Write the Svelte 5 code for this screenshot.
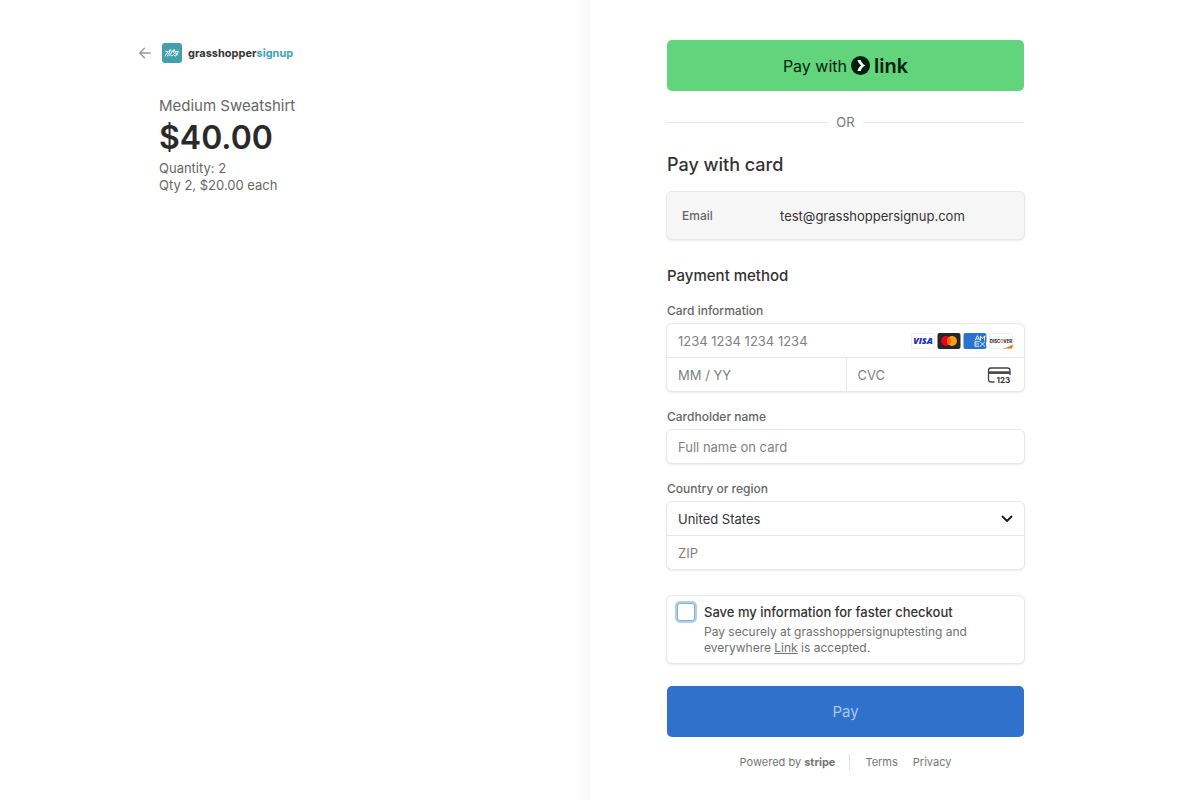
<script>
  let cardNumber = $state('');
  let expiry = $state('');
  let cvc = $state('');
  let name = $state('');
  let country = $state('US');
  let zip = $state('');
  let save = $state(false);

  const countries = [
    { code: 'US', label: 'United States' },
    { code: 'CA', label: 'Canada' },
    { code: 'GB', label: 'United Kingdom' }
  ];
</script>

<main class="checkout">
  <section class="summary">
    <header class="brand">
      <a class="back" href="#back" aria-label="Back">
        <svg width="12" height="12" viewBox="0 0 12 12" fill="none" stroke="#999" stroke-width="1.4" stroke-linecap="round" stroke-linejoin="round">
          <path d="M11.3 6H1M5.4 1.2L.8 6l4.6 4.8" />
        </svg>
      </a>
      <svg class="logo" width="20" height="20" viewBox="0 0 20 20">
        <rect width="20" height="20" rx="3" fill="#429fae" />
        <g fill="none" stroke="#fff" stroke-width="0.9" stroke-linejoin="round" stroke-linecap="round">
          <path d="M3.200 13L5 9.500l1.600 1L5.300 13M3.600 8.200l3 .8 1.600-2.200L10 8.700l2-2 1.400 2 3-.5-1.600 3.800-1.800 1.200-1.400-1.700-1.800 1.700-1.700-1.900-1.500 1.700" />
          <path d="M8.200 6.800l-1 3.700M12 6.700l-.6 2.800 1.700 1.300M9.800 8.700l-1 2.200M13.400 8.700l1.400 3.300" />
        </g>
      </svg>
      <span class="brand-name">grasshopper<span class="teal">signup</span></span>
    </header>
    <div class="product">
      <h1>Medium Sweatshirt</h1>
      <p class="price">$40.00</p>
      <p class="detail">Quantity: 2</p>
      <p class="detail">Qty 2, $20.00 each</p>
    </div>
  </section>

  <section class="payment">
    <form onsubmit={(e) => e.preventDefault()}>
      <button type="button" class="link-button">
        <span>Pay with</span>
        <svg width="19" height="19" viewBox="0 0 19 19">
          <circle cx="9.5" cy="9.5" r="9.5" fill="#011e0f" />
          <path d="M6.500 4h3.200c.6 2.300 2.200 4.200 4.600 5.500-2.400 1.300-4 3.200-4.600 5.500H6.500c.6-2.300 1.900-4.200 3.800-5.500C8.400 8.200 7.100 6.300 6.500 4z" fill="#fff" />
        </svg>
        <strong>link</strong>
      </button>

      <div class="divider"><span>OR</span></div>

      <h2>Pay with card</h2>
      <dl class="box email">
        <dt>Email</dt>
        <dd>test@grasshoppersignup.com</dd>
      </dl>

      <h3>Payment method</h3>

      <div class="field">
        <label for="card-number">Card information</label>
        <div class="box">
          <div class="row">
            <input id="card-number" placeholder="1234 1234 1234 1234" bind:value={cardNumber} />
            <div class="cards">
              <svg width="24" height="16" viewBox="0 0 24 16" role="img" aria-label="Visa">
                <rect x=".5" y=".5" width="23" height="15" rx="2" fill="#fff" stroke="#ececec" />
                <text x="12" y="11.300" text-anchor="middle" font-family="Open Sans, sans-serif" font-size="9" font-weight="800" font-style="italic" fill="#2029c4">VISA</text>
              </svg>
              <svg width="24" height="16" viewBox="0 0 24 16" role="img" aria-label="Mastercard">
                <rect x=".5" width="23" height="16" rx="2" fill="#252525" />
                <circle cx="9" cy="8" r="5" fill="#eb001b" />
                <circle cx="15" cy="8" r="5" fill="#f79e1b" />
                <path d="M12 4a5 5 0 0 1 0 8 5 5 0 0 1 0-8z" fill="#ff5f00" />
              </svg>
              <svg width="24" height="16" viewBox="0 0 24 16" role="img" aria-label="American Express">
                <rect x=".5" width="23" height="16" rx="2" fill="#2a72d0" />
                <g fill="none" stroke="#fff" stroke-width="1" opacity=".85">
                  <path d="M12 7.500l2.500-4.800L17 7.500M13 6h3M17.500 7.500V3l2 2.500 2-2.500v4.500M23.500 3H22M12 13.300V8.700h4.500M12 11h4M12 13.300h4.500M17 8.700l5 4.800M22 8.700l-5 4.800M23.500 9v4" />
                </g>
              </svg>
              <svg width="24" height="16" viewBox="0 0 24 16" role="img" aria-label="Discover">
                <rect x=".5" y=".5" width="23" height="15" rx="2" fill="#fff" stroke="#ececec" />
                <path d="M14 15.500c3.500-.7 7-2.200 9.500-4v2.500c0 .8-.7 1.500-1.500 1.500z" fill="#f47216" />
                <text x="12" y="9.700" text-anchor="middle" font-family="Inter, sans-serif" font-size="4.300" font-weight="800" fill="#333">DISC<tspan fill="#f47216">O</tspan>VER</text>
              </svg>
            </div>
          </div>
          <div class="row split">
            <input aria-label="Expiration" placeholder="MM / YY" bind:value={expiry} />
            <div class="cvc">
              <input aria-label="CVC" placeholder="CVC" bind:value={cvc} />
              <svg width="24" height="18" viewBox="0 0 24 18">
                <path d="M7.500 16H4a2.500 2.500 0 0 1-2.500-2.500v-9A2.500 2.500 0 0 1 4 2h16.500A2.500 2.500 0 0 1 23 4.500V9" fill="none" stroke="#444" stroke-width="1.300" />
                <path d="M1.500 5.300H23v2.600H1.500z" fill="#444" />
                <text x="9.500" y="17" font-family="Inter, sans-serif" font-size="8" font-weight="700" fill="#333">123</text>
              </svg>
            </div>
          </div>
        </div>
      </div>

      <div class="field">
        <label for="name">Cardholder name</label>
        <div class="box">
          <div class="row"><input id="name" placeholder="Full name on card" bind:value={name} /></div>
        </div>
      </div>

      <div class="field">
        <label for="country">Country or region</label>
        <div class="box">
          <div class="row select">
            <select id="country" bind:value={country}>
              {#each countries as c}
                <option value={c.code}>{c.label}</option>
              {/each}
            </select>
            <svg width="12" height="8" viewBox="0 0 12 8" fill="none" stroke="#1a1a1a" stroke-width="1.800" stroke-linecap="round" stroke-linejoin="round">
              <path d="M1.500 1.500L6 6l4.500-4.500" />
            </svg>
          </div>
          <div class="row"><input aria-label="ZIP" placeholder="ZIP" bind:value={zip} /></div>
        </div>
      </div>

      <div class="box save">
        <input id="save" type="checkbox" bind:checked={save} />
        <div>
          <label for="save">Save my information for faster checkout</label>
          <p>Pay securely at grasshoppersignuptesting and everywhere <a href="#link">Link</a> is accepted.</p>
        </div>
      </div>

      <button type="submit" class="pay">Pay</button>
    </form>

    <footer>
      <span class="powered">Powered by <b>stripe</b></span>
      <nav>
        <a href="#terms">Terms</a>
        <a href="#privacy">Privacy</a>
      </nav>
    </footer>
  </section>
</main>

<style>
  :global(body) {
    background: #fff;
  }

  .checkout {
    display: grid;
    grid-template-columns: 59fr 61fr;
    min-height: 100vh;
    font-family: Inter, 'Liberation Sans', sans-serif;
    color: #333;
  }

  h1, h2, h3, p, dl, dd {
    margin: 0;
  }

  svg {
    display: block;
    flex: none;
  }

  .summary {
    padding: 43px 24px 40px 139px;
    background: linear-gradient(to left, #f9f9f9, #fff 14px);
  }

  .brand {
    display: flex;
    align-items: center;
    height: 20px;
  }

  .logo {
    margin: 0 6px 0 11px;
  }

  .brand-name {
    font-size: 11px;
    font-weight: 700;
    line-height: 16px;
  }

  .teal {
    color: #3fa3b5;
  }

  .product {
    padding: 33px 0 0 20px;
    color: #666;
  }

  h1 {
    font-size: 15px;
    font-weight: 400;
    line-height: 20px;
  }

  .price {
    font-size: 32px;
    font-weight: 600;
    line-height: 44px;
    color: #2a2a2a;
  }

  .detail {
    font-size: 13px;
    line-height: 17px;
  }

  .payment {
    padding: 40px 24px 24px 77px;
  }

  form, footer {
    max-width: 357px;
  }

  button {
    display: flex;
    align-items: center;
    justify-content: center;
    width: 100%;
    height: 51px;
    border: 0;
    border-radius: 5px;
    font-family: inherit;
    font-size: 16px;
  }

  .link-button {
    gap: 4px;
    background: #62d47b;
    color: #011e0f;
  }

  .link-button strong {
    font-size: 20px;
    font-weight: 600;
  }

  .divider {
    display: flex;
    align-items: center;
    gap: 8px;
    margin: 21px 0;
    font-size: 13px;
    line-height: 20px;
    color: #777;
  }

  .divider::before,
  .divider::after {
    content: '';
    flex: 1;
    height: 1px;
    background: #e6e6e6;
  }

  h2 {
    font-size: 18px;
    font-weight: 500;
    line-height: 24px;
  }

  h3 {
    margin-top: 27px;
    font-size: 15px;
    font-weight: 500;
    line-height: 20px;
  }

  .box {
    border-radius: 5px;
    background: #fff;
    box-shadow: 0 0 0 1px #e8e8e8, 0 1px 2px 1px rgba(0, 0, 0, 0.07);
  }

  .email {
    display: grid;
    grid-template-columns: 98px 1fr;
    align-items: center;
    height: 47px;
    margin-top: 15px;
    padding: 0 15px;
    background: #f6f6f6;
    font-size: 13px;
  }

  .email dt {
    font-size: 12px;
    font-weight: 500;
    color: #666;
  }

  .field {
    margin-top: 18px;
  }

  h3 + .field {
    margin-top: 17px;
  }

  .field label {
    display: block;
    margin-bottom: 5px;
    font-size: 12px;
    font-weight: 500;
    line-height: 16px;
    color: #666;
  }

  .row {
    display: flex;
    align-items: center;
    height: 33px;
  }

  .row + .row {
    border-top: 1px solid #e8e8e8;
  }

  .split {
    display: grid;
    grid-template-columns: 1fr 1fr;
  }

  .row input,
  .row select {
    box-sizing: border-box;
    flex: 1;
    min-width: 0;
    height: 100%;
    padding: 0 11px;
    border: 0;
    outline: 0;
    background: none;
    font-family: inherit;
    font-size: 13px;
    color: #333;
  }

  .row input::placeholder {
    color: #808080;
    opacity: 1;
  }

  .cards {
    display: flex;
    gap: 2px;
    margin-right: 11px;
  }

  .cvc {
    display: flex;
    align-items: center;
    min-width: 0;
    height: 100%;
    border-left: 1px solid #e8e8e8;
  }

  .cvc svg {
    margin-right: 13px;
  }

  .select {
    display: grid;
    align-items: center;
  }

  .select select {
    grid-area: 1 / 1;
    width: 100%;
    appearance: none;
  }

  .select svg {
    grid-area: 1 / 1;
    justify-self: end;
    margin-right: 11px;
    pointer-events: none;
  }

  .save {
    display: flex;
    gap: 9px;
    margin-top: 27px;
    padding: 7px 10px;
  }

  .save input {
    appearance: none;
    flex: none;
    box-sizing: border-box;
    width: 18px;
    height: 18px;
    margin: 0;
    border: 1px solid #84afd3;
    border-radius: 3px;
    background: #fff;
    box-shadow: 0 0 0 2px #b2d1e9;
  }

  .save input:checked {
    background: #3171cc;
  }

  .save label {
    display: block;
    font-size: 13px;
    font-weight: 500;
    line-height: 18px;
  }

  .save p {
    margin-top: 3px;
    font-size: 12px;
    line-height: 16px;
    color: #707070;
  }

  .save a {
    color: inherit;
  }

  .pay {
    margin-top: 23px;
    background: #3071cb;
    color: #aac6eb;
    font-size: 15px;
  }

  footer {
    display: flex;
    justify-content: center;
    margin-top: 17px;
    font-size: 11px;
    line-height: 16px;
    color: #757575;
  }

  .powered {
    padding-right: 14px;
    border-right: 1px solid #e0e0e0;
  }

  .powered b {
    font-weight: 700;
  }

  nav {
    display: flex;
    gap: 15px;
    padding-left: 15px;
  }

  nav a {
    color: inherit;
    text-decoration: none;
  }
</style>
